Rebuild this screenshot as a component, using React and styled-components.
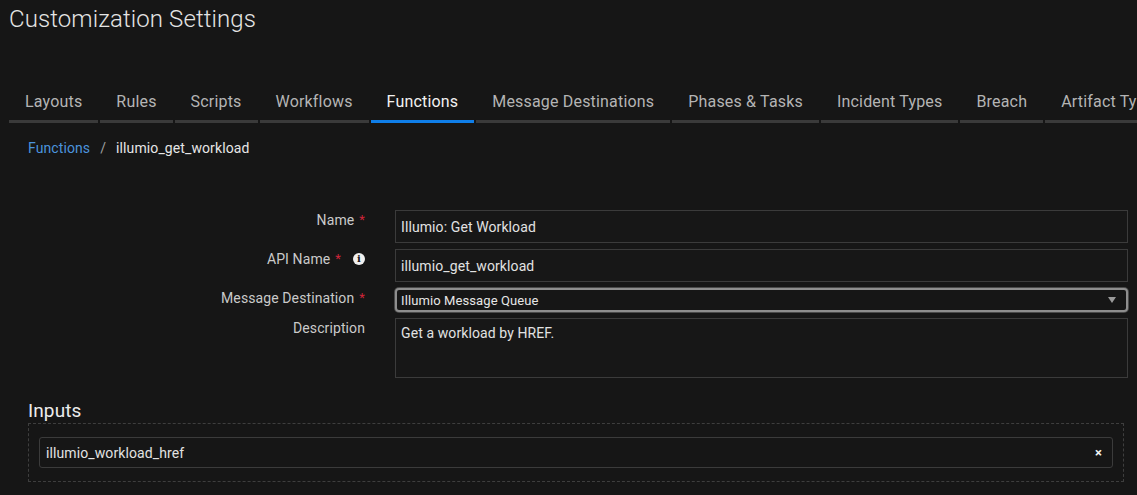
import React from 'react';
import styled, { createGlobalStyle } from 'styled-components';

const GlobalStyle = createGlobalStyle`
    html, body {
        margin: 0;
        padding: 0;
        background: #161616;
    }
    body {
        font-family: Roboto, "Liberation Sans", sans-serif;
        color: #e0e0e0;
        letter-spacing: 0.1px;
    }
`;

const Page = styled.div`
    width: 1137px;
    height: 495px;
    overflow: hidden;
    background: #161616;
`;

const Title = styled.h1`
    margin: 0;
    padding: 3px 9px 0;
    font-size: 24px;
    font-weight: 300;
    line-height: 32px;
    color: #e4e4e4;
`;

const TabBar = styled.nav`
    display: flex;
    gap: 2px;
    margin-top: 47px;
    padding-left: 9px;
    white-space: nowrap;
    overflow: hidden;
`;

const Tab = styled.div`
    flex: none;
    padding: 10px 16px 8px;
    font-size: 16px;
    line-height: 20px;
    letter-spacing: 0.18px;
    color: ${p => (p.active ? '#f2f2f2' : '#b4b4b4')};
    border-bottom: 3px solid ${p => (p.active ? '#0f7ee8' : '#3a3a3a')};
`;

const Crumbs = styled.div`
    display: flex;
    gap: 10px;
    padding: 16px 28px 0;
    font-size: 14px;
    line-height: 18px;
    color: #e6e6e6;
`;

const CrumbLink = styled.span`
    color: #4b93dd;
`;

const Sep = styled.span`
    color: #a0a0a0;
`;

const Form = styled.div`
    display: grid;
    grid-template-columns: 365px 1fr;
    column-gap: 30px;
    row-gap: 6px;
    margin-top: 53px;
    padding-right: 9px;
`;

const Label = styled.div`
    display: flex;
    justify-content: flex-end;
    align-items: center;
    gap: 5px;
    padding-top: 1px;
    font-size: 14px;
    line-height: 18px;
    color: #cacaca;
    height: 18px;
`;

const Star = styled.span`
    color: #d0253a;
    font-size: 13px;
`;

const Info = styled.span`
    display: inline-flex;
    align-items: center;
    justify-content: center;
    width: 12px;
    height: 12px;
    border-radius: 50%;
    background: #f0f0f0;
    color: #161616;
    font-size: 10px;
    font-weight: 700;
    font-family: "DejaVu Serif", serif;
    margin-left: 7px;
`;

const Field = styled.div`
    box-sizing: border-box;
    height: ${p => p.h}px;
    border: 1px solid #3b3b3b;
    padding: ${p => (p.multi ? '6px 5px' : '0 5px')};
    display: flex;
    align-items: ${p => (p.multi ? 'flex-start' : 'center')};
    font-size: 14px;
    color: #e2e2e2;
    background: #171717;
`;

const Select = styled.div`
    box-sizing: border-box;
    height: 24px;
    border: 2px solid #8e8e8e;
    border-radius: 4px;
    box-shadow: 0 0 0 1px #4a4a4a;
    padding: 0 10px 0 4px;
    display: flex;
    align-items: center;
    justify-content: space-between;
    font-size: 13px;
    color: #e6e6e6;
    background: #161616;
`;

const Caret = styled.span`
    width: 0;
    height: 0;
    border-left: 4px solid transparent;
    border-right: 4px solid transparent;
    border-top: 6px solid #9a9a9a;
`;

const Section = styled.section`
    padding: 23px 13px 0 28px;
`;

const SectionTitle = styled.h2`
    margin: 0 0 2px;
    font-size: 19px;
    font-weight: 400;
    line-height: 20px;
    color: #ececec;
`;

const DropZone = styled.div`
    border: 1px dashed #3e3e3e;
    padding: 13px 10px 13px;
`;

const Chip = styled.div`
    display: flex;
    align-items: center;
    justify-content: space-between;
    box-sizing: border-box;
    height: 31px;
    padding: 0 10px 0 6px;
    border: 1px solid #3b3b3b;
    border-radius: 3px;
    font-size: 14px;
    color: #e2e2e2;
`;

const Close = styled.span`
    font-size: 13px;
    font-weight: 700;
    color: #f4f4f4;
`;

const tabs = ['Layouts', 'Rules', 'Scripts', 'Workflows', 'Functions', 'Message Destinations', 'Phases & Tasks', 'Incident Types', 'Breach', 'Artifact Types'];

export default function App() {
    return (
        <Page>
            <GlobalStyle />
            <Title>Customization Settings</Title>
            <TabBar>
                {tabs.map(t => (
                    <Tab key={t} active={t === 'Functions'}>{t}</Tab>
                ))}
            </TabBar>
            <Crumbs>
                <CrumbLink>Functions</CrumbLink>
                <Sep>/</Sep>
                <span>illumio_get_workload</span>
            </Crumbs>
            <Form>
                <Label>Name <Star>*</Star></Label>
                <Field h={33}>Illumio: Get Workload</Field>

                <Label>API Name <Star>*</Star><Info>i</Info></Label>
                <Field h={33}>illumio_get_workload</Field>

                <Label>Message Destination <Star>*</Star></Label>
                <Select>
                    <span>Illumio Message Queue</span>
                    <Caret />
                </Select>

                <Label>Description</Label>
                <Field h={60} multi>Get a workload by HREF.</Field>
            </Form>
            <Section>
                <SectionTitle>Inputs</SectionTitle>
                <DropZone>
                    <Chip>
                        <span>illumio_workload_href</span>
                        <Close>×</Close>
                    </Chip>
                </DropZone>
            </Section>
        </Page>
    );
}
